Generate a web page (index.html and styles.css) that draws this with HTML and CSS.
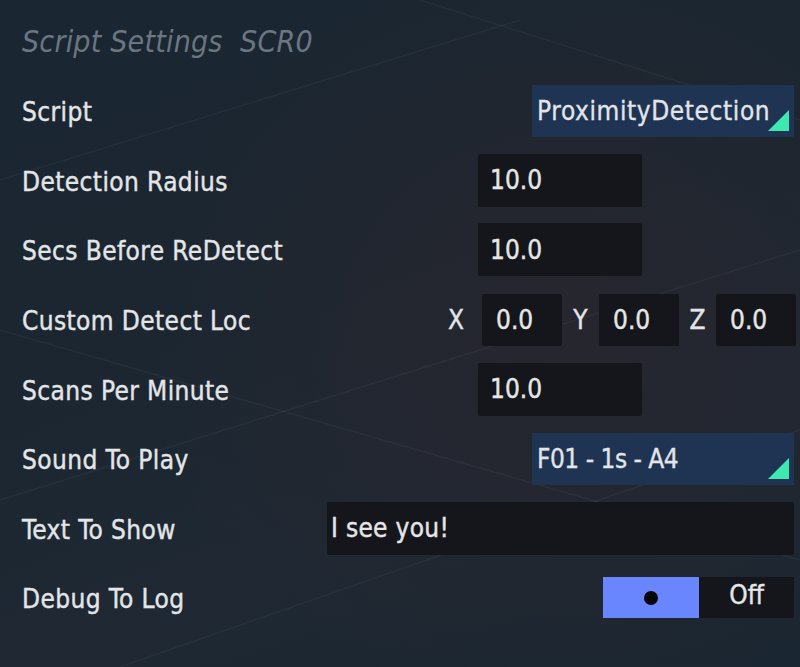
FILE: index.html
```html
<!DOCTYPE html>
<html>
<head>
<meta charset="utf-8">
<link rel="stylesheet" href="styles.css">
</head>
<body>
<div class="panel">
  <svg class="lines" width="800" height="667" viewBox="0 0 800 667">
    <line x1="0" y1="500" x2="800" y2="250" />
    <line x1="0" y1="330" x2="800" y2="560" />
    <line x1="420" y1="0" x2="800" y2="120" />
    <line x1="120" y1="667" x2="800" y2="430" />
    <line x1="0" y1="180" x2="520" y2="20" />
  </svg>
  <h1 class="title">Script Settings&nbsp; SCR0</h1>
  <div class="rows">
    <div class="row">
      <div class="label">Script</div>
      <div class="ctrl">
        <div class="dropdown wide"><span>ProximityDetection</span><i class="tri"></i></div>
      </div>
    </div>
    <div class="row">
      <div class="label">Detection Radius</div>
      <div class="ctrl">
        <div class="field num">10.0</div>
      </div>
    </div>
    <div class="row">
      <div class="label">Secs Before ReDetect</div>
      <div class="ctrl">
        <div class="field num">10.0</div>
      </div>
    </div>
    <div class="row">
      <div class="label">Custom Detect Loc</div>
      <div class="ctrl ctrl-xyz">
        <div class="xyz">
          <span class="axis first">X</span><div class="field small">0.0</div>
          <span class="axis">Y</span><div class="field small">0.0</div>
          <span class="axis">Z</span><div class="field small">0.0</div>
        </div>
      </div>
    </div>
    <div class="row">
      <div class="label">Scans Per Minute</div>
      <div class="ctrl">
        <div class="field num">10.0</div>
      </div>
    </div>
    <div class="row">
      <div class="label">Sound To Play</div>
      <div class="ctrl">
        <div class="dropdown wide tight"><span>F01 - 1s - A4</span><i class="tri"></i></div>
      </div>
    </div>
    <div class="row">
      <div class="label">Text To Show</div>
      <div class="ctrl">
        <div class="field text">I see you!</div>
      </div>
    </div>
    <div class="row">
      <div class="label">Debug To Log</div>
      <div class="ctrl">
        <div class="toggle">
          <div class="knob-side"><span class="dot"></span></div>
          <div class="state">Off</div>
        </div>
      </div>
    </div>
  </div>
</div>
</body>
</html>
```
FILE: styles.css
```css
* { box-sizing: border-box; }
html, body { margin: 0; padding: 0; }
body {
  width: 800px;
  height: 667px;
  overflow: hidden;
  font-family: "DejaVu Sans Condensed", "DejaVu Sans", sans-serif;
}
.panel {
  position: relative;
  width: 800px;
  height: 667px;
  padding: 21px 6px 0 22px;
  background:
    radial-gradient(ellipse 420px 380px at 560px 330px, rgba(40, 38, 46, 0.9), rgba(40, 38, 46, 0) 100%),
    linear-gradient(160deg, #1a2631 0%, #1b2631 40%, #1f2833 70%, #1a2631 100%);
  color: #e4e6e8;
}
.lines {
  position: absolute;
  left: 0;
  top: 0;
  pointer-events: none;
}
.lines line {
  stroke: rgba(160, 175, 190, 0.07);
  stroke-width: 1.5;
}
.title {
  position: relative;
  margin: 0;
  height: 42px;
  font-size: 30px;
  line-height: 42px;
  font-style: italic;
  font-weight: normal;
  letter-spacing: 0.2px;
  color: #6b7681;
}
.rows {
  position: relative;
  margin-top: 13px;
  display: flex;
  flex-direction: column;
}
.row {
  display: flex;
  align-items: center;
  height: 69.6px;
}
.label {
  font-size: 26px;
  letter-spacing: 0.4px;
  color: #e3e5e7;
  white-space: nowrap;
  padding-top: 3px;
  -webkit-text-stroke: 0.4px #e3e5e7;
}
.ctrl {
  flex: 1;
  display: flex;
  justify-content: flex-end;
}
.ctrl-xyz { margin-right: -2px; }
.field {
  background: #14161b;
  border-radius: 2px;
  height: 53px;
  display: flex;
  align-items: center;
  font-size: 26px;
  color: #e6e6e6;
  -webkit-text-stroke: 0.4px #e6e6e6;
}
.num {
  width: 164px;
  padding-left: 12px;
  margin-right: 152px;
}
.small {
  width: 80px;
  height: 52px;
  padding-left: 14px;
}
.xyz {
  display: flex;
  align-items: center;
}
.axis {
  font-size: 26px;
  color: #e3e5e7;
  width: 37px;
  text-align: center;
  -webkit-text-stroke: 0.4px #e3e5e7;
}
.axis.first { width: 34px; text-align: left; }
.text {
  width: 467px;
  padding-left: 4px;
  letter-spacing: 0.3px;
}
.dropdown {
  position: relative;
  background: #1f3452;
  height: 52px;
  display: flex;
  align-items: center;
  padding-left: 5px;
  font-size: 26px;
  letter-spacing: 0.6px;
  color: #e2e5ea;
  -webkit-text-stroke: 0.3px #e2e5ea;
}
.tight { letter-spacing: -0.5px; }
.wide { width: 262px; }
.tri {
  position: absolute;
  right: 5px;
  bottom: 6px;
  width: 0;
  height: 0;
  border-style: solid;
  border-width: 0 0 21px 21px;
  border-color: transparent transparent #3de9b1 transparent;
}
.toggle {
  display: flex;
  height: 41px;
}
.knob-side {
  width: 96px;
  background: #6a86ff;
  display: flex;
  align-items: center;
  justify-content: center;
}
.dot {
  width: 14px;
  height: 14px;
  border-radius: 50%;
  background: #050608;
}
.state {
  width: 95px;
  background: #14161b;
  display: flex;
  align-items: center;
  justify-content: center;
  font-size: 26px;
  color: #e6e6e6;
  padding-bottom: 5px;
  -webkit-text-stroke: 0.4px #e6e6e6;
}
```
